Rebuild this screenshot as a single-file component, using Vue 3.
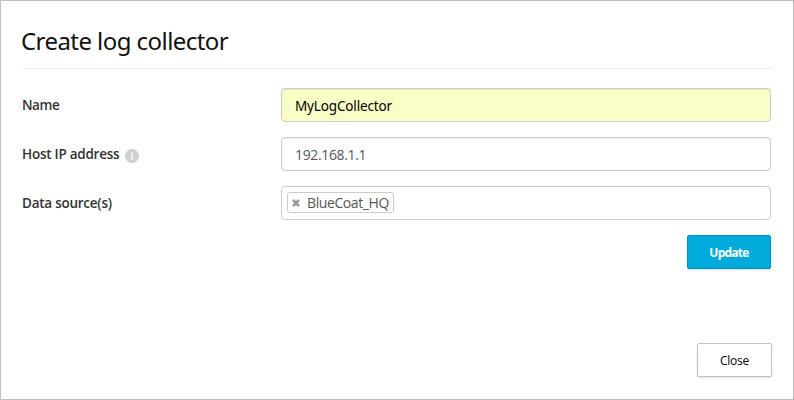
<script setup>
import { ref } from 'vue'

const name = ref('MyLogCollector')
const host = ref('192.168.1.1')
const sources = ref(['BlueCoat_HQ'])

function removeSource(index) {
  sources.value.splice(index, 1)
}
</script>

<template>
  <main class="dialog">
    <h1 class="title"><span>Create log collector</span></h1>
    <form class="form" @submit.prevent>
      <div class="row">
        <label class="label name-label" for="name">Name</label>
        <input id="name" v-model="name" class="field filled" type="text" />
      </div>
      <div class="row">
        <label class="label host-label" for="host">
          <span>Host IP address</span>
          <svg class="info" viewBox="0 0 14 14" width="14" height="14">
            <circle cx="7" cy="7" r="7" fill="#d0d0d0" />
            <path d="M6 3.3h2v1.5H6zM5.6 5.8H8v3.8h.6v1H5.4v-1H6V6.8h-.4z" fill="#f4f4f4" />
          </svg>
        </label>
        <input id="host" v-model="host" class="field host" type="text" />
      </div>
      <div class="row">
        <span class="label source-label">Data source(s)</span>
        <div class="field tags">
          <span v-for="(source, i) in sources" :key="source" class="tag">
            <svg class="remove" viewBox="0 0 8 8" width="8" height="8" @click="removeSource(i)">
              <path d="M1 1l6 6M7 1L1 7" stroke="#999" stroke-width="2.5" />
            </svg>
            <span>{{ source }}</span>
          </span>
        </div>
      </div>
      <button class="button update" type="submit">Update</button>
    </form>
    <button class="button close" type="button">Close</button>
  </main>
</template>

<style>
body {
  margin: 0;
  background: #fff;
}
</style>

<style scoped>
.dialog {
  box-sizing: border-box;
  width: 794px;
  height: 400px;
  padding: 22px 21px 22px 21px;
  border: 1px solid #c0c0c0;
  background: #fff;
  display: flex;
  flex-direction: column;
  font-family: "Open Sans", "Noto Sans", sans-serif;
  font-size: 14px;
  color: #333;
}
.title {
  box-sizing: border-box;
  height: 46px;
  margin: 0;
  border-bottom: 1px solid #eee;
  font-family: "Noto Sans", "Open Sans", sans-serif;
  font-size: 24px;
  line-height: 36px;
  font-weight: 400;
  letter-spacing: -0.56px;
  text-indent: -1px;
  color: #111;
}
.form {
  display: flex;
  flex-direction: column;
  gap: 15px;
  padding: 19px 1px 0 0;
}
.row {
  display: flex;
  height: 34px;
}
.label {
  display: flex;
  align-items: center;
  gap: 6px;
  width: 259px;
  flex: none;
  height: 34px;
  font-size: 13.5px;
  font-weight: 600;
  letter-spacing: -0.25px;
}
.name-label {
  letter-spacing: -0.45px;
}
.info {
  margin-top: 3px;
}
.field {
  box-sizing: border-box;
  flex: 1;
  min-width: 0;
  height: 34px;
  margin: 0;
  padding: 0 13px;
  border: 1px solid #ccc;
  border-radius: 4px;
  background: #fff;
  box-shadow: inset 0 1px 1px rgba(0, 0, 0, 0.075);
  color: #555;
  font-family: inherit;
  font-size: 14px;
  outline: none;
}
.host {
  padding-top: 1px;
  letter-spacing: -0.35px;
}
.filled {
  padding-top: 2px;
  background: #fafdc5;
  color: #000;
  font-family: "Noto Sans", "Open Sans", sans-serif;
  font-size: 13.5px;
  letter-spacing: -0.15px;
}
.tags {
  display: flex;
  padding: 5px;
  box-shadow: none;
  letter-spacing: -0.4px;
}
.tag {
  box-sizing: border-box;
  display: flex;
  align-items: center;
  gap: 7px;
  height: 21px;
  width: 107px;
  padding: 0 4px;
  border: 1px solid #ccc;
  border-radius: 3px;
  white-space: nowrap;
}
.remove {
  flex: none;
}
.button {
  box-sizing: border-box;
  align-self: flex-end;
  height: 34px;
  margin: 0;
  padding: 1px 0 0;
  border-radius: 2px;
  font-family: inherit;
  font-size: 12px;
}
.update {
  width: 84px;
  border: 1px solid #0097bd;
  background: #00abdb;
  color: #fff;
  font-weight: 700;
  letter-spacing: -0.75px;
  box-shadow: 0 1px 2px rgba(0, 0, 0, 0.15);
}
.close {
  width: 75px;
  margin-top: auto;
  border: 1px solid #c4c4c4;
  background: #fff;
  color: #000;
  letter-spacing: -0.3px;
  box-shadow: 0 1px 2px rgba(0, 0, 0, 0.13);
}
</style>
